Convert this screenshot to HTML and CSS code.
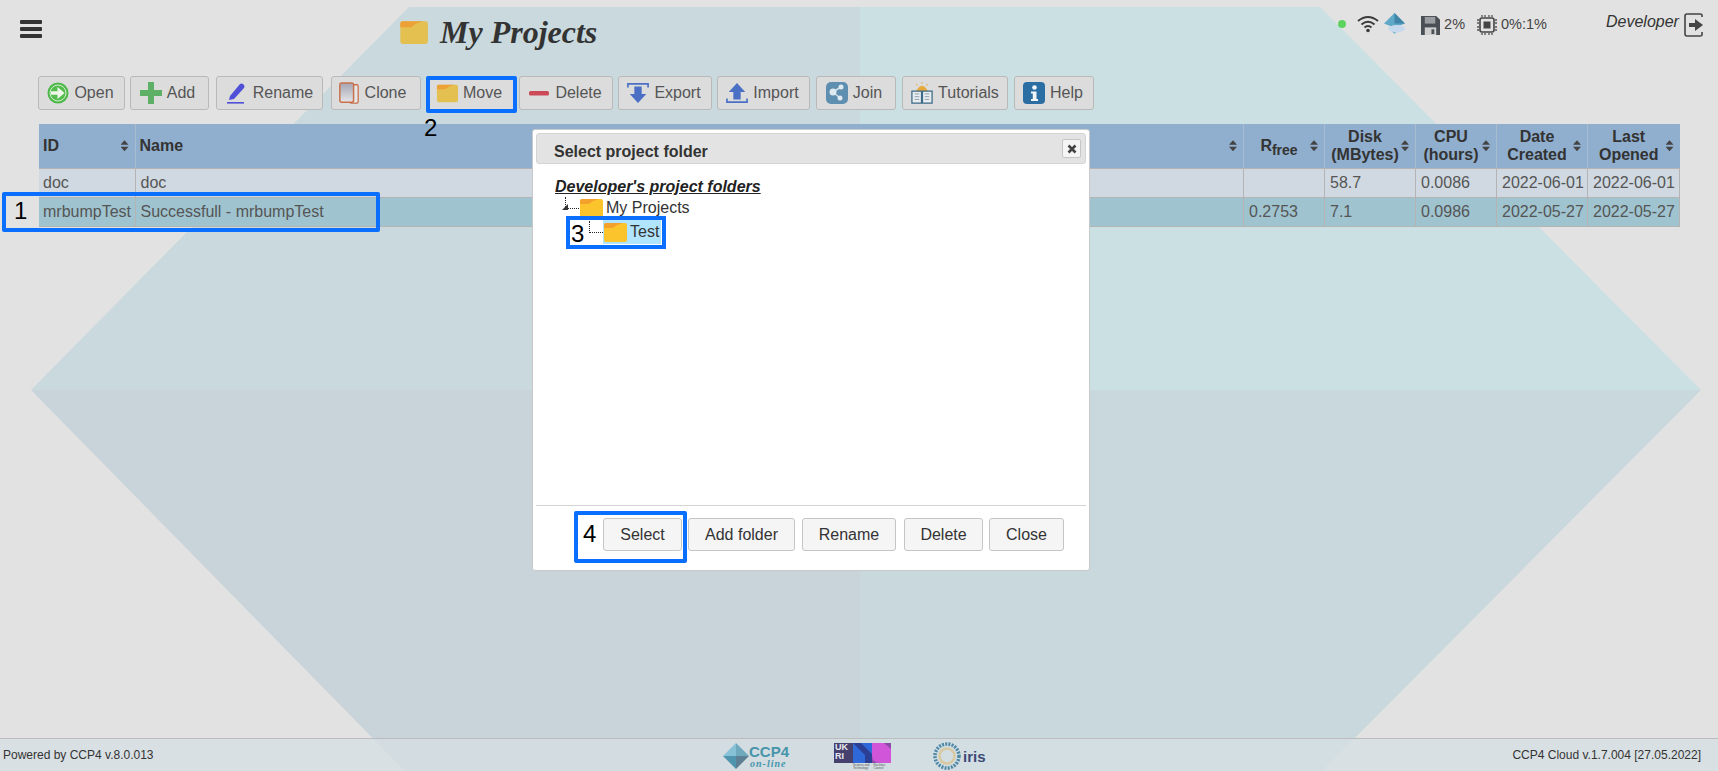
FILE: index.html
```html
<!DOCTYPE html>
<html lang="en">
<head>
  <meta charset="UTF-8" />
  <title>My Projects</title>
  <link rel="stylesheet" href="styles.css">
</head>
<body>

<svg class="backdrop" viewBox="0 0 1718 771" width="1718" height="771">
  <polygon points="409,7 860,7 860,390 31,390" fill="#c9d9dd"/>
  <polygon points="860,7 1320,7 1701,390 860,390" fill="#cbe0e3"/>
  <polygon points="31,390 860,390 860,771 405,771" fill="#c8d4da"/>
  <polygon points="860,390 1701,390 1322,771 860,771" fill="#c8d8dc"/>
</svg>

<svg class="defs" width="0" height="0">
  <symbol id="folder" viewBox="0 0 24 20">
    <path d="M1 3 Q1 1 3 1 H22 Q24 1 24 3 V18 Q24 20 22 20 H3 Q1 20 1 18 Z" fill="currentColor"/>
    <path d="M1 6 V3 Q1 1 3 1 H20 L14 3 L10 6 Z" fill="#f0962c" opacity=".75"/>
  </symbol>
  <linearGradient id="sheet" x1="0" y1="0" x2="0" y2="1">
    <stop offset="0" stop-color="#a5a5b4"/>
    <stop offset="1" stop-color="#e4e4e8"/>
  </linearGradient>
</svg>

<header class="topbar">
  <div class="burger"><span></span><span></span><span></span></div>
  <div class="page-title">
    <svg class="title-folder folder-dim"><use href="#folder"/></svg>
    <h1>My Projects</h1>
  </div>
  <div class="status">
    <span class="dot"></span>
    <svg class="st-wifi" viewBox="0 0 22 18" fill="none" stroke="#3a3a3a" stroke-width="2">
      <path d="M1 6 Q11 -2 21 6"/><path d="M4.500 9.500 Q11 4 17.500 9.500"/><path d="M7.500 12.500 Q11 9.500 14.500 12.500"/>
      <circle cx="11" cy="15.500" r="1.800" fill="#3a3a3a" stroke="none"/>
    </svg>
    <svg class="st-cloud" viewBox="0 0 22 22">
      <polygon points="11,1 21,11 11,15 1,11" fill="#5fa8c8"/>
      <polygon points="11,1 21,11 11,11" fill="#3f86a8"/>
      <polygon points="5,15 11,21 17,15" fill="#7db4cf"/>
      <ellipse cx="13" cy="16" rx="8" ry="3.500" fill="#c7d9ec"/>
    </svg>
    <svg class="st-disk" viewBox="0 0 20 20">
      <path d="M0 0 H16 L20 4 V20 H0 Z" fill="#4a4f55"/>
      <rect x="4" y="1" width="11" height="7" fill="#9a9ea3"/>
      <rect x="4" y="12" width="12" height="8" fill="#cfcfcf"/>
      <rect x="11" y="14" width="3" height="5" fill="#4a4f55"/>
    </svg>
    <span class="st-text st-disk-val">2%</span>
    <svg class="st-chip" viewBox="0 0 20 20">
      <rect x="3" y="3" width="14" height="14" rx="2" fill="none" stroke="#444" stroke-width="1.600"/>
      <rect x="6.500" y="6.500" width="7" height="7" fill="#444"/>
      <path d="M5 0 V2 M8 0 V2 M12 0 V2 M15 0 V2 M5 18 V20 M8 18 V20 M12 18 V20 M15 18 V20 M0 5 H2 M0 8 H2 M0 12 H2 M0 15 H2 M18 5 H20 M18 8 H20 M18 12 H20 M18 15 H20" stroke="#555" stroke-width="1.300"/>
    </svg>
    <span class="st-text">0%:1%</span>
  </div>
  <div class="user">
    <span>Developer</span>
    <svg class="exit" viewBox="0 0 20 24" fill="none">
      <path d="M18 4 V2 Q18 1 16 1 H3 Q1 1 1 3 V21 Q1 23 3 23 H16 Q18 23 18 22 V19" stroke="#444" stroke-width="1.600"/>
      <path d="M5 10 H11 V6 L19 12 L11 18 V14 H5 Z" fill="#444"/>
    </svg>
  </div>
</header>

<nav class="toolbar">
  <button class="tb tb-open">
    <svg viewBox="0 0 22 22"><circle cx="11" cy="11" r="10.500" fill="#4cb848"/><circle cx="11" cy="11" r="8" fill="#55bd4f" stroke="#d9eed5" stroke-width="1"/><path d="M4 9.200 H10.500 V5 L17.500 11 L10.500 17 V12.800 H4 Z" fill="#eef7ea"/></svg>
    Open
  </button>
  <button class="tb tb-add">
    <svg viewBox="0 0 22 22"><path d="M8 0 H14 V8 H22 V14 H14 V22 H8 V14 H0 V8 H8 Z" fill="#5fb067"/></svg>
    Add
  </button>
  <button class="tb tb-rename">
    <svg viewBox="0 0 22 22"><path d="M4 14 L14 2 Q15.500 1 17 2 L18 3 Q19 4.500 18 6 L8 17 L3 18 Z" fill="#4f4fd8"/><rect x="1" y="20" width="17" height="1.600" fill="#4f4fd8"/></svg>
    Rename
  </button>
  <button class="tb tb-clone">
    <svg viewBox="0 0 22 24"><rect x="12" y="3" width="9" height="20" rx="1.500" fill="#e6e6e8" stroke="#c9704a" stroke-width="1.400"/><rect x="1" y="1" width="15" height="21" rx="2" fill="url(#sheet)" stroke="#c9704a" stroke-width="1.600"/></svg>
    Clone
  </button>
  <button class="tb tb-move">
    <svg class="folder-dim"><use href="#folder"/></svg>
    Move
  </button>
  <button class="tb tb-delete">
    <svg viewBox="0 0 22 22"><rect x="1" y="9" width="20" height="4.500" rx="1.500" fill="#cc4a57"/></svg>
    Delete
  </button>
  <button class="tb tb-export">
    <svg viewBox="0 0 24 24"><path d="M1 6 V2 H23 V6" fill="none" stroke="#4a6fc4" stroke-width="1.800"/><path d="M8 5 H16 V13 H21 L12 23 L3 13 H8 Z" fill="#4a6fc4"/></svg>
    Export
  </button>
  <button class="tb tb-import">
    <svg viewBox="0 0 24 24"><path d="M1 18 V22 H23 V18" fill="none" stroke="#4a6fc4" stroke-width="1.800"/><path d="M8 19 H16 V11 H21 L12 1 L3 11 H8 Z" fill="#4a6fc4"/></svg>
    Import
  </button>
  <button class="tb tb-join">
    <svg viewBox="0 0 22 22"><rect width="22" height="22" rx="5" fill="#5f8fb0"/><path d="M7 10 L15 5 M7 10 L14 16" stroke="#cfe0ea" stroke-width="1.500"/><circle cx="7" cy="10" r="3.500" fill="#dfe9f0"/><circle cx="15" cy="5" r="2.500" fill="#dfe9f0"/><circle cx="14" cy="16" r="2.500" fill="#dfe9f0"/></svg>
    Join
  </button>
  <button class="tb tb-tutorials">
    <svg viewBox="0 0 24 24"><path d="M5 11 Q12 -3 19 11 Z" fill="#e6a93a"/><path d="M12 0 V2 M6 2 L7 4 M18 2 L17 4" stroke="#e6a93a" stroke-width="1"/><path d="M1 10 H11.500 V23 H1 Z M12.500 10 H23 V23 H12.500 Z" fill="#e8edf0" stroke="#3d6a88" stroke-width="1.400"/><path d="M4 13 H9 M4 16 H9 M4 19 H9 M15 13 H20 M15 16 H20 M15 19 H20" stroke="#8a9aa6" stroke-width="1"/></svg>
    Tutorials
  </button>
  <button class="tb tb-help">
    <svg viewBox="0 0 22 22"><rect width="22" height="22" rx="4" fill="#2b6ea3"/><circle cx="11.500" cy="5.500" r="2.300" fill="#f2f6f9"/><path d="M8 9.500 H13.500 V17 H15 V19 H8 V17 H9.800 V11.500 H8 Z" fill="#f2f6f9"/></svg>
    Help
  </button>
</nav>

<table class="projects">
  <thead>
    <tr>
      <th class="c-id"><div class="th-in th-left">ID<span class="sort"></span></div></th>
      <th class="c-name"><div class="th-in th-left">Name<span class="sort"></span></div></th>
      <th class="c-rfree"><div class="th-in"><span class="th-label">R<sub>free</sub></span><span class="sort"></span></div></th>
      <th class="c-disk"><div class="th-in"><span class="th-label">Disk<br>(MBytes)</span><span class="sort"></span></div></th>
      <th class="c-cpu"><div class="th-in"><span class="th-label">CPU<br>(hours)</span><span class="sort"></span></div></th>
      <th class="c-date"><div class="th-in"><span class="th-label">Date<br>Created</span><span class="sort"></span></div></th>
      <th class="c-date2"><div class="th-in"><span class="th-label">Last<br>Opened</span><span class="sort"></span></div></th>
    </tr>
  </thead>
  <tbody>
    <tr class="row-plain">
      <td>doc</td><td>doc</td><td></td><td>58.7</td><td>0.0086</td><td>2022-06-01</td><td>2022-06-01</td>
    </tr>
    <tr class="row-sel">
      <td>mrbumpTest</td><td>Successfull - mrbumpTest</td><td>0.2753</td><td>7.1</td><td>0.0986</td><td>2022-05-27</td><td>2022-05-27</td>
    </tr>
  </tbody>
</table>

<footer class="footer">
  <span>Powered by CCP4 v.8.0.013</span>
  <div class="logos">
    <div class="logo-ccp4">
      <svg viewBox="0 0 26 26" width="26" height="26">
        <polygon points="13,0 26,13 13,13" fill="#6fa9bd"/>
        <polygon points="13,0 0,13 13,13" fill="#86c1d8"/>
        <polygon points="0,13 13,26 13,13" fill="#4f95ad"/>
        <polygon points="26,13 13,26 13,13" fill="#5d8094"/>
      </svg>
      <div class="ccp4-text"><b>CCP4</b><i>on-line</i></div>
    </div>
    <div class="logo-ukri">
      <div class="ukri-top">
        <span class="ukri-mark">UK<br>RI</span>
        <svg viewBox="0 0 19 20" width="19" height="20"><rect width="19" height="20" fill="#2f68d8"/><polygon points="0,0 12,12 12,20 19,20 19,11 8,0" fill="#2b3f94"/></svg>
        <svg viewBox="0 0 19 20" width="19" height="20"><rect width="19" height="20" fill="#8a4aa8"/><path d="M0 0 H12 L19 6 V20 H8 Q0 20 0 12 Z" fill="#d055d8"/></svg>
      </div>
      <div class="ukri-small">
        <span>Science and<br>Technology</span>
        <span>Facilities<br>Council</span>
      </div>
    </div>
    <div class="logo-iris">
      <svg viewBox="0 0 28 28" width="28" height="28" fill="none">
        <circle cx="14" cy="14" r="12" stroke="#4d88a6" stroke-width="3.500" stroke-dasharray="2 1.200"/>
        <circle cx="14" cy="14" r="7.500" stroke="#d9c9a0" stroke-width="2.500"/>
      </svg>
      <span>iris</span>
    </div>
  </div>
  <span>CCP4 Cloud v.1.7.004 [27.05.2022]</span>
</footer>

<!-- folder dialog -->
<div class="dialog">
  <div class="dialog-title">
    Select project folder
    <span class="dialog-close">
      <svg viewBox="0 0 10 10" width="10" height="10"><path d="M1.500 1.500 L8.500 8.500 M8.500 1.500 L1.500 8.500" stroke="#444" stroke-width="2.600"/></svg>
    </span>
  </div>
  <div class="dialog-body">
    <div class="tree-head">Developer's project folders</div>
    <div class="tree-row tree-root">
      <span class="tree-line tree-line-root"><span class="tree-tip"></span></span>
      <svg class="tree-folder"><use href="#folder"/></svg>
      <span>My Projects</span>
    </div>
    <div class="tree-row tree-child">
      <span class="tree-line"></span>
      <span class="tree-sel">
        <svg class="tree-folder"><use href="#folder"/></svg>
        <span>Test</span>
      </span>
    </div>
  </div>
  <div class="dialog-foot">
    <button class="dl-btn dl-select">Select</button>
    <button class="dl-btn dl-add">Add folder</button>
    <button class="dl-btn dl-rename">Rename</button>
    <button class="dl-btn dl-delete">Delete</button>
    <button class="dl-btn dl-close">Close</button>
  </div>
</div>

<!-- tutorial callouts -->
<div class="mark mark-1"></div>
<div class="mark mark-2"></div>
<div class="mark mark-3"></div>
<div class="mark mark-4"></div>
<span class="num num-1">1</span>
<span class="num num-2">2</span>
<span class="num num-3">3</span>
<span class="num num-4">4</span>

</body>
</html>
```

FILE: styles.css
```css
html, body {
  height: 100%;
}

body {
  margin: 0;
  height: 771px;
  overflow: hidden;
  display: flex;
  flex-direction: column;
  font-family: "Liberation Sans", Arial, sans-serif;
  font-size: 16px;
  color: #555;
  background: #e2e2e2;
}

.backdrop {
  position: absolute;
  left: 0;
  top: 0;
  z-index: -1;
}

.defs {
  position: absolute;
}

/* Top bar */
.topbar {
  height: 76px;
  flex: none;
  display: grid;
  grid-template-columns: 399px 1fr auto 112px;
  color: #333;
}

.burger {
  padding: 20px 0 0 20px;
  display: flex;
  flex-direction: column;
  gap: 3px;
}

.burger span {
  display: block;
  width: 22px;
  height: 4px;
  background: #333;
  border-radius: 1px;
}

.page-title {
  display: flex;
  align-items: flex-start;
  gap: 12px;
  padding-top: 16px;
}

.title-folder {
  width: 29px;
  height: 24px;
  margin-top: 4px;
}

.folder-dim {
  color: #e3c04f;
}

h1 {
  margin: 0;
  font-family: "Liberation Serif", "Times New Roman", serif;
  font-style: italic;
  font-weight: bold;
  font-size: 32px;
  line-height: 32px;
  color: #333;
}

.status {
  display: flex;
  align-items: flex-start;
  padding-top: 14px;
  margin-right: 59px;
}

.dot {
  width: 8px;
  height: 8px;
  margin-top: 6px;
  border-radius: 50%;
  background: #5fd35f;
}

.st-wifi {
  width: 22px;
  height: 18px;
  margin-left: 11px;
  margin-top: 1px;
}

.st-cloud {
  width: 23px;
  height: 23px;
  margin-left: 4px;
  margin-top: -2px;
}

.st-disk {
  width: 19px;
  height: 19px;
  margin-left: 15px;
  margin-top: 2px;
}

.st-text {
  font-size: 14.500px;
  line-height: 20px;
  margin-left: 4px;
  color: #444;
}

.st-chip {
  width: 20px;
  height: 20px;
  margin-left: 12px;
  margin-top: 1px;
}

.user {
  display: flex;
  align-items: flex-start;
  gap: 5px;
  padding-top: 13px;
  font-style: italic;
  color: #333;
}

.exit {
  width: 20px;
  height: 24px;
}

/* Toolbar */
.toolbar {
  flex: none;
  display: flex;
  padding-left: 38px;
  height: 34px;
}

.tb {
  box-sizing: border-box;
  height: 34px;
  padding: 0 2px 0 0;
  display: flex;
  align-items: center;
  justify-content: center;
  gap: 5px;
  font: 16px "Liberation Sans", Arial, sans-serif;
  color: #555;
  background: #dcdcdc;
  border: 1px solid #b9b9b9;
  border-radius: 3px;
}

.tb svg {
  width: 22px;
  height: 22px;
  flex: none;
}

.tb-open { width: 87px; }
.tb-add { width: 79px; margin-left: 5px; padding-right: 4px; }
.tb-rename { width: 107px; margin-left: 7px; padding-right: 0; }
.tb-clone { width: 90px; margin-left: 8px; padding-right: 8px; }
.tb-move { width: 88px; margin-left: 6px; padding-right: 4px; }
.tb-delete { width: 94px; margin-left: 4px; }
.tb-export { width: 94px; margin-left: 5px; }
.tb-import { width: 93px; margin-left: 5px; }
.tb-join { width: 80px; margin-left: 6px; padding-right: 4px; }
.tb-tutorials { width: 106px; margin-left: 6px; padding-right: 0; }
.tb-help { width: 80px; margin-left: 6px; }

/* Project table */
.projects {
  flex: none;
  margin: 14px 0 0 39px;
  width: 1641px;
  table-layout: fixed;
  border-collapse: collapse;
}

.projects th,
.projects td {
  box-sizing: border-box;
}

.c-id { width: 96px; }
.c-rfree { width: 81px; }
.c-disk { width: 91px; }
.c-cpu { width: 81px; }
.c-date { width: 91px; }
.c-date2 { width: 92px; }

.projects th {
  height: 44px;
  padding: 0 5px 0 4px;
  background: #90aecd;
  color: #333;
  font-size: 16px;
  line-height: 18px;
  border-left: 1px solid #a9bccf;
  border-bottom: 1px solid #b4b4b4;
  text-align: center;
}

.projects th:first-child {
  border-left: 0;
}

.th-in {
  display: flex;
  align-items: center;
}

.th-left {
  justify-content: space-between;
}

.th-label {
  flex: 1;
}

.th-label sub {
  font-size: 14px;
  line-height: 0;
}

.sort {
  flex: none;
  width: 8px;
  height: 11px;
  margin-right: 1px;
  background: #444;
  clip-path: polygon(50% 0, 100% 42%, 50% 42%, 50% 58%, 100% 58%, 50% 100%, 0 58%, 50% 58%, 50% 42%, 0 42%);
}

.projects td {
  height: 29px;
  padding: 0 0 0 5px;
  border: 1px solid #b4b4b4;
  border-top: 0;
  color: #555;
  white-space: nowrap;
  overflow: hidden;
}

.projects td:first-child {
  border-left: 0;
  padding-left: 4px;
}

.row-plain td {
  background: #d0d9e1;
}

.row-sel td {
  background: #9fc3cf;
}

/* Footer */
.footer {
  margin-top: auto;
  height: 32px;
  flex: none;
  display: flex;
  align-items: center;
  justify-content: space-between;
  padding: 0 17px 0 3px;
  font-size: 12px;
  color: #333;
  background: rgba(214, 223, 227, 0.73);
  border-top: 1px solid #bcbcbc;
}

.logos {
  position: absolute;
  left: 723px;
  bottom: 1px;
  display: flex;
  align-items: center;
}

.logo-ccp4 {
  display: flex;
  width: 111px;
  gap: 0;
}

.ccp4-text {
  display: flex;
  flex-direction: column;
  padding-top: 1px;
  color: #4795ab;
}

.ccp4-text b {
  font-size: 15px;
  line-height: 15px;
}

.ccp4-text i {
  font-family: "Liberation Serif", serif;
  font-size: 10px;
  line-height: 10px;
  letter-spacing: 1px;
  font-weight: bold;
  padding-left: 1px;
}

.logo-ukri {
  width: 99px;
}

.ukri-top {
  display: flex;
}

.ukri-mark {
  box-sizing: border-box;
  width: 19px;
  height: 20px;
  padding-left: 1px;
  background: #46406e;
  color: #e8e8f0;
  font-size: 9px;
  line-height: 9px;
  font-weight: bold;
}

.ukri-small {
  display: flex;
  gap: 4px;
  margin: 1px 0 0 19px;
  font-size: 3px;
  line-height: 3px;
  color: #555;
}

.logo-iris {
  display: flex;
  align-items: center;
  gap: 2px;
  font-weight: bold;
  font-size: 15px;
  color: #3d4a78;
}

/* Dialog */
.dialog {
  position: absolute;
  left: 532px;
  top: 129px;
  width: 558px;
  height: 442px;
  box-sizing: border-box;
  display: flex;
  flex-direction: column;
  background: #fff;
  border: 1px solid #c9c9c9;
  border-radius: 3px;
  color: #333;
}

.dialog-title {
  margin: 3px 3px 0;
  height: 31px;
  box-sizing: border-box;
  padding: 6px 0 0 17px;
  display: flex;
  align-items: center;
  justify-content: space-between;
  font-weight: bold;
  background: #e3e3e3;
  border: 1px solid #d4d4d4;
  border-radius: 3px;
}

.dialog-close {
  width: 19px;
  height: 19px;
  box-sizing: border-box;
  margin: -6px 4px 0 0;
  display: flex;
  align-items: center;
  justify-content: center;
  background: #f5f5f5;
  border: 1px solid #c5c5c5;
  border-radius: 2px;
}

.dialog-body {
  flex: 1;
  padding: 14px 0 0 22px;
}

.tree-head {
  font-weight: bold;
  font-style: italic;
  text-decoration: underline;
  line-height: 18px;
  color: #222;
}

.tree-row {
  display: flex;
  align-items: center;
  height: 24px;
}

.tree-root {
  margin-left: 10px;
}

.tree-child {
  margin-left: 34px;
}

.tree-line {
  position: relative;
  flex: none;
  width: 13px;
  height: 11px;
  margin-bottom: 11px;
  border-left: 1px dotted #222;
  border-bottom: 1px dotted #222;
}

.tree-tip {
  position: absolute;
  left: -4px;
  bottom: -2px;
  border-left: 6px solid transparent;
  border-bottom: 6px solid #333;
}

.tree-folder {
  width: 24px;
  height: 20px;
  color: #fcc42c;
  flex: none;
}

.tree-row > .tree-folder {
  margin-right: 3px;
}

.tree-sel {
  display: flex;
  align-items: center;
  gap: 3px;
  height: 24px;
  padding-right: 2px;
  background: #b0e4ff;
}

.dialog-foot {
  margin: 0 3px;
  height: 65px;
  box-sizing: border-box;
  padding: 12px 22px 0 0;
  display: flex;
  justify-content: flex-end;
  align-items: flex-start;
  gap: 6px;
  border-top: 1px solid #d4d4d4;
}

.dl-btn {
  box-sizing: border-box;
  height: 33px;
  padding: 0;
  font: 16px "Liberation Sans", Arial, sans-serif;
  color: #333;
  background: #f5f5f5;
  border: 1px solid #c5c5c5;
  border-radius: 3px;
}

.dl-select { width: 79px; }
.dl-add { width: 107px; }
.dl-rename { width: 94px; margin-left: 1px; }
.dl-delete { width: 79px; margin-left: 2px; }
.dl-close { width: 75px; }

/* Callouts */
.mark {
  position: absolute;
  box-sizing: border-box;
  border: 4px solid #0a6eff;
  border-radius: 2px;
}

.mark-1 { left: 2px; top: 192px; width: 378px; height: 40px; }
.mark-2 { left: 426px; top: 76px; width: 91px; height: 37px; }
.mark-3 { left: 566px; top: 216px; width: 100px; height: 33px; border-radius: 0; }
.mark-4 { left: 574px; top: 511px; width: 113px; height: 52px; }

.num {
  position: absolute;
  font-size: 24px;
  line-height: 24px;
  color: #000;
}

.num-1 { left: 14px; top: 199px; }
.num-2 { left: 424px; top: 116px; }
.num-3 { left: 571px; top: 222px; }
.num-4 { left: 583px; top: 522px; }
```
